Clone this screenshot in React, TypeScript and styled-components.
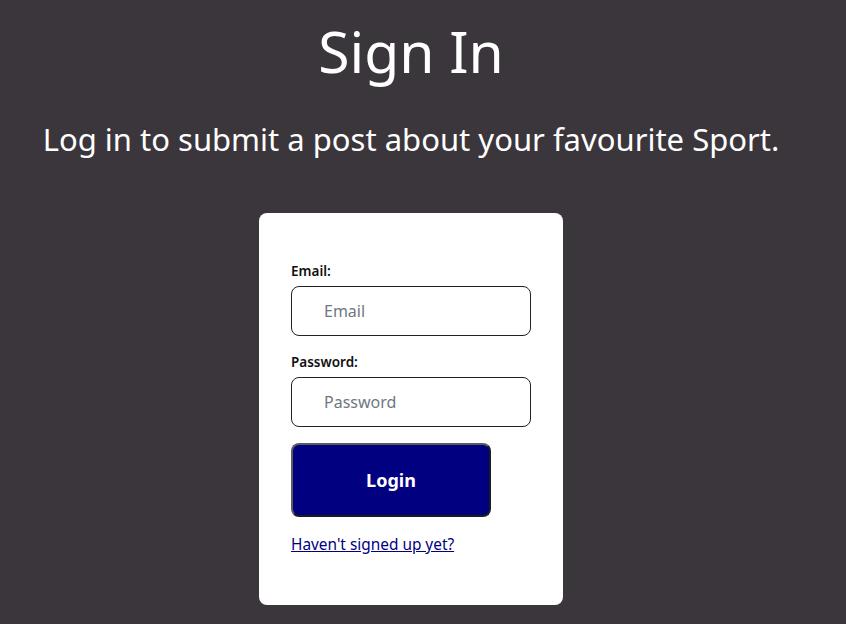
import React from "react";
import styled, { createGlobalStyle } from "styled-components";

const Global = createGlobalStyle`
  html, body { margin: 0; padding: 0; background: #3b353c; }
  body { font-family: "Noto Sans", "Open Sans", sans-serif; }
`;

const Page = styled.div`
  width: 822px;
  min-height: 624px;
  display: flex;
  flex-direction: column;
  align-items: center;
  color: #ffffff;
`;

const Title = styled.h1`
  margin: 16px 0 0;
  font-size: 57px;
  font-weight: 400;
  line-height: 70px;
`;

const Subtitle = styled.h2`
  margin: 33px 0 0;
  font-size: 31px;
  font-weight: 400;
  line-height: 40px;
`;

const Card = styled.form`
  margin-top: 54px;
  width: 304px;
  box-sizing: border-box;
  padding: 49px 32px 50px;
  background: #ffffff;
  border-radius: 8px;
  display: flex;
  flex-direction: column;
  align-items: flex-start;
  color: #111;
`;

const Label = styled.label`
  font-size: 13.5px;
  font-weight: 600;
  line-height: 18px;
  margin-bottom: 6px;
`;

const Input = styled.input`
  width: 240px;
  height: 50px;
  box-sizing: border-box;
  border: 1px solid #222;
  border-radius: 8px;
  padding: 0 0 0 32px;
  font-family: inherit;
  font-size: 16px;
  margin: 0 0 17px;
  &::placeholder { color: #6f7780; }
`;

const Button = styled.button`
  width: 200px;
  height: 74px;
  margin-top: -1px;
  box-sizing: border-box;
  background: #000080;
  color: #fff;
  border-width: 2px;
  border-style: solid;
  border-color: #5c5c5c #1c1c1c #1c1c1c #5c5c5c;
  border-radius: 8px;
  font-family: inherit;
  font-size: 18px;
  font-weight: 700;
`;

const Link = styled.a`
  margin-top: 18px;
  font-size: 15.4px;
  line-height: 20px;
  color: #000080;
  text-decoration: underline;
`;

export default function App() {
  return (
    <>
      <Global />
      <Page>
        <Title>Sign In</Title>
        <Subtitle>Log in to submit a post about your favourite Sport.</Subtitle>
        <Card onSubmit={(e) => e.preventDefault()}>
          <Label htmlFor="email">Email:</Label>
          <Input id="email" type="email" placeholder="Email" />
          <Label htmlFor="password">Password:</Label>
          <Input id="password" type="password" placeholder="Password" />
          <Button type="submit">Login</Button>
          <Link href="#">Haven't signed up yet?</Link>
        </Card>
      </Page>
    </>
  );
}
